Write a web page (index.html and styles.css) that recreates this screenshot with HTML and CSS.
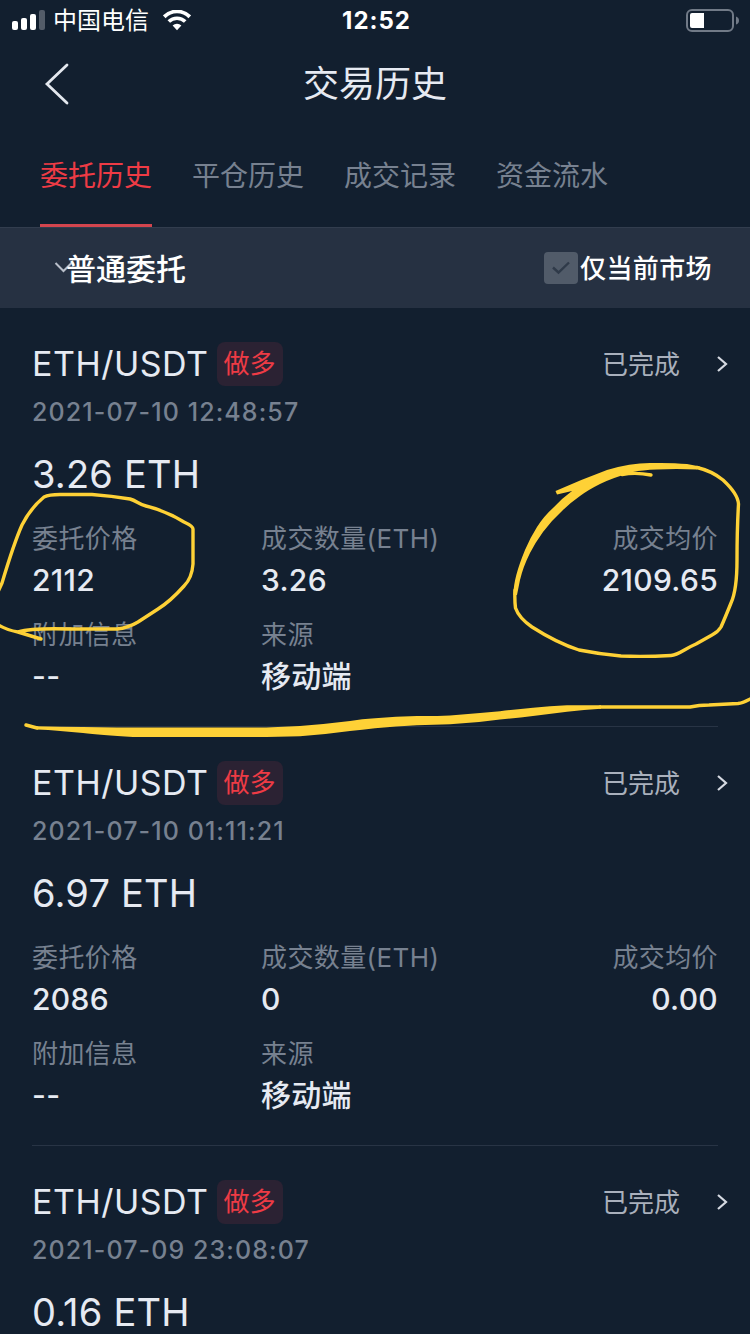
FILE: index.html
```html
<!DOCTYPE html>
<html lang="zh-CN">
<head>
    <meta charset="UTF-8">
    <meta name="viewport" content="width=device-width, initial-scale=1.0">
    <title>交易历史</title>
    <link rel="stylesheet" href="styles.css">
</head>
<body>

    <div class="screen">
        <!-- 状态栏 -->
        <div class="status">
            <div class="status-left">
                <svg class="signal" width="34" height="22" viewBox="0 0 34 22">
                    <rect x="0" y="12" width="6" height="9" rx="2" fill="#fff"/>
                    <rect x="9" y="9" width="6" height="12" rx="2" fill="#fff"/>
                    <rect x="18" y="5" width="6" height="16" rx="2" fill="#fff"/>
                    <rect x="27" y="1" width="6" height="20" rx="2" fill="#535c69"/>
                </svg>
                <span class="carrier">中国电信</span>
                <svg class="wifi" width="28" height="21" viewBox="0 0 28 21">
                    <path d="M1.2 6.8A18 18 0 0 1 26.8 6.8" fill="none" stroke="#fff" stroke-width="3.8"/>
                    <path d="M5.8 11.6A11.6 11.6 0 0 1 22.2 11.6" fill="none" stroke="#fff" stroke-width="3.6"/>
                    <path d="M9.6 15.6A6.2 6.2 0 0 1 18.4 15.6L14 20.2Z" fill="#fff"/>
                </svg>
            </div>
            <div class="clock">12:52</div>
            <svg class="battery" width="54" height="24" viewBox="0 0 54 24">
                <rect x="1" y="2" width="46" height="21" rx="5" fill="none" stroke="#717a87" stroke-width="2"/>
                <path d="M6 5H18V20H6Q4 20 4 18V7Q4 5 6 5Z" fill="#fff"/>
                <path d="M50 8.5Q53 9.5 53 12.5Q53 15.5 50 16.5Z" fill="#717a87"/>
            </svg>
        </div>

        <!-- 标题 -->
        <div class="navbar">
            <svg class="back" width="26" height="42" viewBox="0 0 26 42">
                <path d="M23 2L3 21L23 40" fill="none" stroke="#e3e7ee" stroke-width="2.8" stroke-linecap="round"/>
            </svg>
            <h1>交易历史</h1>
        </div>

        <div class="tabs">
            <div class="tab active">委托历史</div>
            <div class="tab">平仓历史</div>
            <div class="tab">成交记录</div>
            <div class="tab">资金流水</div>
        </div>

        <!-- 筛选 -->
        <div class="filter">
            <div class="filter-type">
                <svg class="down" width="20" height="14" viewBox="0 0 20 14">
                    <path d="M1.5 3L9.5 11L17.5 3" fill="none" stroke="#b9bfca" stroke-width="2"/>
                </svg>
                <span>普通委托</span>
            </div>
            <div class="filter-market">
                <span class="checkbox">
                    <svg width="20" height="14" viewBox="0 0 20 14">
                        <path d="M2 6.5L7.5 11.5L18 1.5" fill="none" stroke="#2f3a49" stroke-width="2.4"/>
                    </svg>
                </span>
                <span class="market-text">仅当前市场</span>
            </div>
        </div>

        <!-- 委托列表 -->
        <div class="list">
            <div class="order">
                <div class="order-head">
                    <span class="pair">ETH/USDT</span>
                    <span class="badge">做多</span>
                    <span class="state">已完成</span>
                    <svg class="arrow" width="12" height="18" viewBox="0 0 12 18"><path d="M2 2L10 9L2 16" fill="none" stroke="#d6dae2" stroke-width="2.2"/></svg>
                </div>
                <div class="date">2021-07-10 12:48:57</div>
                <div class="amount">3.26 ETH</div>
                <div class="fields">
                    <div class="field"><div class="label">委托价格</div><div class="value">2112</div></div>
                    <div class="field"><div class="label">成交数量(ETH)</div><div class="value">3.26</div></div>
                    <div class="field right"><div class="label">成交均价</div><div class="value">2109.65</div></div>
                    <div class="field"><div class="label">附加信息</div><div class="value">--</div></div>
                    <div class="field"><div class="label">来源</div><div class="value">移动端</div></div>
                </div>
            </div>

            <div class="order">
                <div class="order-head">
                    <span class="pair">ETH/USDT</span>
                    <span class="badge">做多</span>
                    <span class="state">已完成</span>
                    <svg class="arrow" width="12" height="18" viewBox="0 0 12 18"><path d="M2 2L10 9L2 16" fill="none" stroke="#d6dae2" stroke-width="2.2"/></svg>
                </div>
                <div class="date">2021-07-10 01:11:21</div>
                <div class="amount">6.97 ETH</div>
                <div class="fields">
                    <div class="field"><div class="label">委托价格</div><div class="value">2086</div></div>
                    <div class="field"><div class="label">成交数量(ETH)</div><div class="value">0</div></div>
                    <div class="field right"><div class="label">成交均价</div><div class="value">0.00</div></div>
                    <div class="field"><div class="label">附加信息</div><div class="value">--</div></div>
                    <div class="field"><div class="label">来源</div><div class="value">移动端</div></div>
                </div>
            </div>

            <div class="order">
                <div class="order-head">
                    <span class="pair">ETH/USDT</span>
                    <span class="badge">做多</span>
                    <span class="state">已完成</span>
                    <svg class="arrow" width="12" height="18" viewBox="0 0 12 18"><path d="M2 2L10 9L2 16" fill="none" stroke="#d6dae2" stroke-width="2.2"/></svg>
                </div>
                <div class="date">2021-07-09 23:08:07</div>
                <div class="amount">0.16 ETH</div>
            </div>
        </div>

        <!-- 手绘标注 -->
        <svg class="marks" width="750" height="1334" viewBox="0 0 750 1334">
            <g fill="none" stroke="#fed136" stroke-width="3.4" stroke-linecap="round" stroke-linejoin="round">
                <path d="M41 639L18 632Q6 630 -3 624M-3 594L2 583Q14 543 22 525C29 511 38 502 44 497Q49 494.5 60 494.5H92Q112 496 130 499C137 501 138 504 146 506Q166 511 184 522Q193 526 193 529V564Q192 578 184 586C176 595 166 604 158 609L138 622Q128 628 117 629L68 629Q32 628 18 632"/>
                <path d="M697 467.5Q712 471 723 480Q738 494 738.5 504Q737 530 737 560Q737 590 731 603Q725 618 721 627Q718 632 712 635L696 644C684 649 679 655 671 655.5Q644 657 621 656Q599 654 579 650Q557 643 532 627Q519 618 515.5 608Q514.5 600 515 590"/>
                <path d="M26 725L37 728M600 707H690Q699 705 709 705L738 703.5Q743 703 752 698"/>
                <path d="M622 474.5Q636 472 651 475"/>
            </g>
            <g fill="#fed136">
                <path d="M555.5 491Q580 480 607 470Q630 463 650 463Q672 462.5 687 464L700 466.5L697 469.5Q676 468.5 657 469.5Q642 470 633 472Q612 478 600 484Q588 490 580 496Q570 503 563 510Q552 520 543 532Q535 543 530 553Q523 567 520 580L517 595H513.5Q513 579 525 550Q530 538 537 527Q544 516 553 508Q561 499 572 491L557 494.5Z"/>
                <path d="M36 726.3L60 726.7L83 726.9L117 727.6H250Q277 727.5 300 726Q326 724 350 721Q362 719 375 718.3Q396 716.5 417 716Q434 716.2 450 715.5Q476 713.5 500 711.3Q517 709 533 707.7Q550 706 567 705.3H601V708.7Q584 709.5 567 711.7L533 716Q517 718 500 719.5Q476 723 450 724.2L417 725.2Q396 726 375 728.3Q362 730 350 731Q325 734.5 300 736.2Q277 737 250 737H133Q100 735 83 733L60 731Q48 730 37 729.6Z"/>
            </g>
        </svg>
    </div>

</body>
</html>
```

FILE: styles.css
```css
* {
    box-sizing: border-box;
}

body {
    margin: 0;
    background-color: #121f2f;
    color: #e6eaf2;
    font-family: Inter, "Noto Sans CJK SC", sans-serif;
}

.screen {
    position: relative;
    width: 750px;
    height: 1334px;
    overflow: hidden;
}

svg {
    display: block;
    flex: none;
}

/* 状态栏 */
.status {
    display: grid;
    grid-template-columns: 1fr auto 1fr;
    align-items: center;
    height: 40px;
    padding: 0 10px 0 12px;
    color: #fff;
}

.status-left {
    display: flex;
    align-items: center;
}

.carrier {
    margin: 0 14px 0 7px;
    padding-top: 2px;
    font-size: 24px;
    line-height: 38px;
}

.clock {
    padding: 1px 0 0 1px;
    font-size: 24px;
    font-weight: 700;
    letter-spacing: 1px;
}

.battery {
    justify-self: end;
}

/* 标题 */
.navbar {
    display: grid;
    grid-template-columns: 100px 1fr 100px;
    align-items: center;
    height: 88px;
}

.back {
    margin-left: 44px;
}

.navbar h1 {
    margin: 0;
    font-size: 36px;
    font-weight: 400;
    line-height: 88px;
    text-align: center;
}

.tabs {
    display: flex;
    gap: 40px;
    height: 99px;
    padding-left: 40px;
}

.tab {
    height: 99px;
    font-size: 28px;
    line-height: 96px;
    color: #778190;
}

.tab.active {
    color: #ee3b45;
    border-bottom: 3px solid #d3454e;
}

/* 筛选 */
.filter {
    display: flex;
    justify-content: space-between;
    align-items: center;
    height: 81px;
    padding: 0 38px 0 54px;
    background-color: #263142;
    border-top: 1px solid #323d4e;
    color: #fff;
}

.filter-type {
    display: flex;
    align-items: center;
    padding-bottom: 3px;
    font-size: 30px;
    font-weight: 500;
}

.down {
    margin-right: -8px;
}

.filter-market {
    display: flex;
    align-items: center;
    gap: 2px;
    font-size: 26px;
    font-weight: 500;
    letter-spacing: 0.4px;
}

.market-text {
    padding-bottom: 4px;
}

.checkbox {
    display: flex;
    align-items: center;
    justify-content: center;
    width: 34px;
    height: 32px;
    border-radius: 4px;
    background-color: #515b69;
}

/* 委托列表 */
.list {
    padding: 0 32px;
}

.order {
    height: 419px;
    padding-top: 34px;
    border-bottom: 1px solid #283445;
}

.order-head {
    display: flex;
    align-items: center;
    height: 44px;
    margin-right: -10px;
}

.pair {
    padding-bottom: 1px;
    font-size: 34px;
    letter-spacing: 0.5px;
}

.badge {
    width: 66px;
    height: 44px;
    margin-left: 8px;
    border-radius: 8px;
    background-color: #2b2233;
    color: #ee3b45;
    font-size: 26px;
    line-height: 44px;
    text-align: center;
}

.state {
    margin-left: auto;
    margin-right: 36px;
    padding-bottom: 4px;
    font-size: 26px;
    color: #a9b0bc;
}

.date {
    margin-top: 8px;
    font-size: 25px;
    font-weight: 500;
    line-height: 36px;
    letter-spacing: 1.1px;
    color: #778190;
}

.amount {
    margin-top: 24px;
    font-size: 38px;
    line-height: 40px;
    letter-spacing: 0.2px;
}

.fields {
    display: grid;
    grid-template-columns: 229px 1fr 1fr;
    row-gap: 17px;
    margin-top: 26px;
}

.right {
    text-align: right;
}

.label {
    height: 36px;
    font-size: 26px;
    line-height: 38px;
    letter-spacing: 0.4px;
    white-space: nowrap;
    color: #778190;
}

.value {
    height: 36px;
    margin-top: 7px;
    font-size: 30px;
    font-weight: 500;
    line-height: 35px;
    letter-spacing: 0.3px;
}

/* 手绘标注 */
.marks {
    position: absolute;
    top: 0;
    left: 0;
}
```
